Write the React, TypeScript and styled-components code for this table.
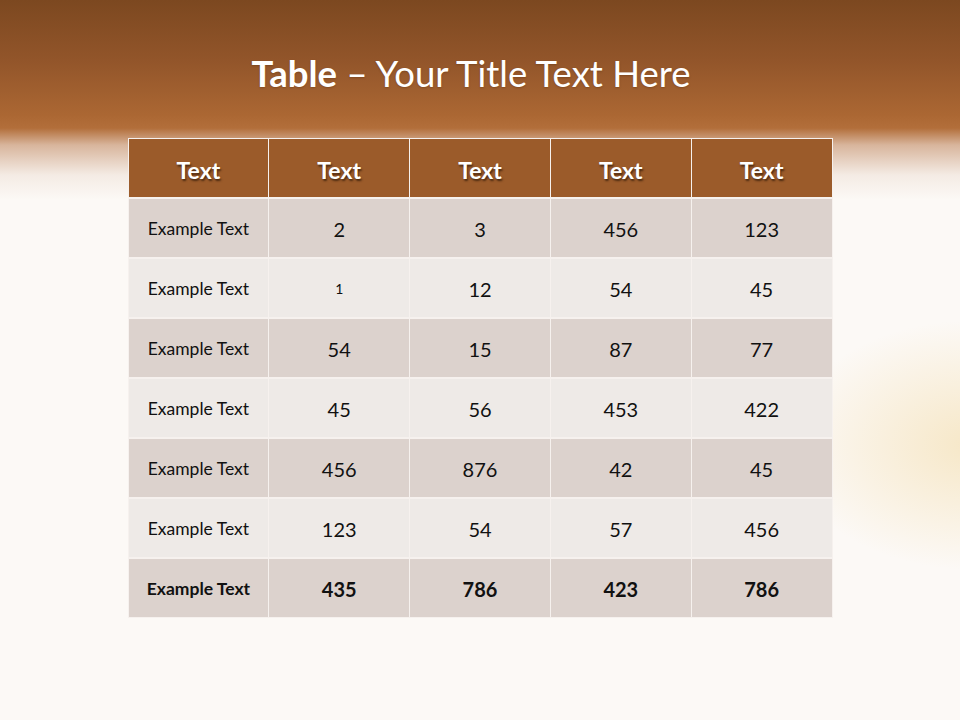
import { FC } from "react";
import styled, { createGlobalStyle } from "styled-components";

const GlobalStyle = createGlobalStyle`
  html, body {
    margin: 0;
    padding: 0;
  }
  body {
    font-family: Lato, "Open Sans", sans-serif;
  }
`;

const header = ["Text", "Text", "Text", "Text", "Text"];

const rows: { cells: string[]; bold?: boolean }[] = [
  { cells: ["Example Text", "2", "3", "456", "123"] },
  { cells: ["Example Text", "1", "12", "54", "45"] },
  { cells: ["Example Text", "54", "15", "87", "77"] },
  { cells: ["Example Text", "45", "56", "453", "422"] },
  { cells: ["Example Text", "456", "876", "42", "45"] },
  { cells: ["Example Text", "123", "54", "57", "456"] },
  { cells: ["Example Text", "435", "786", "423", "786"], bold: true },
];

const App: FC = () => {
  return (
    <>
      <GlobalStyle />
      <Slide>
        <Title>
          <b>Table</b> – Your Title Text Here
        </Title>
        <Grid>
          {header.map((h, i) => (
            <HeadCell key={i}>{h}</HeadCell>
          ))}
          {rows.map((r, ri) =>
            r.cells.map((c, ci) => (
              <Cell
                key={`${ri}-${ci}`}
                $shade={ri % 2 === 0}
                $bold={r.bold}
                $label={ci === 0}
                $small={ri === 1 && ci === 1}
              >
                {c}
              </Cell>
            ))
          )}
        </Grid>
      </Slide>
    </>
  );
};

export default App;

const Slide = styled.div`
  width: 960px;
  height: 720px;
  overflow: hidden;
  display: flex;
  flex-direction: column;
  align-items: center;
  background:
    radial-gradient(ellipse 190px 125px at 975px 445px, rgba(246, 230, 196, 0.95), rgba(250, 240, 225, 0) 100%),
    linear-gradient(
      to bottom,
      #7c4820 0px,
      #92552a 60px,
      #ab6733 115px,
      #b26e3a 128px,
      #d8b59c 145px,
      #f4ebe4 175px,
      #fcf9f6 200px,
      #fcf9f6 100%
    );
`;

const Title = styled.h1`
  margin: 51px 18px 0 0;
  height: 49px;
  font-family: Lato, "Open Sans", sans-serif;
  font-weight: normal;
  font-size: 36.5px;
  color: #ffffff;
  text-shadow: 0 1px 2px rgba(80, 40, 10, 0.35);

  b {
    font-weight: bold;
  }
`;

const Grid = styled.div`
  margin-top: 38px;
  width: 703px;
  display: grid;
  grid-template-columns: repeat(5, 1fr);
  grid-template-rows: 58px repeat(7, 58px);
  gap: 2px 1px;
  padding: 1px;
  background: #f6f1ee;
  box-sizing: content-box;
`;

const HeadCell = styled.div`
  background: #9b5b2a;
  color: #ffffff;
  font-weight: bold;
  font-size: 23px;
  display: flex;
  align-items: center;
  justify-content: center;
  padding-top: 3px;
  text-shadow: 1px 2px 2px rgba(40, 20, 5, 0.7);
`;

const Cell = styled.div<{ $shade: boolean; $bold?: boolean; $label: boolean; $small: boolean }>`
  background: ${(p) => (p.$shade ? "#dcd2cd" : "#eeeae7")};
  color: #111111;
  font-weight: ${(p) => (p.$bold ? "bold" : "normal")};
  font-size: ${(p) => (p.$label ? "17.5px" : p.$small ? "14px" : "20px")};
  display: flex;
  align-items: center;
  justify-content: center;
  padding-top: 1px;
`;
